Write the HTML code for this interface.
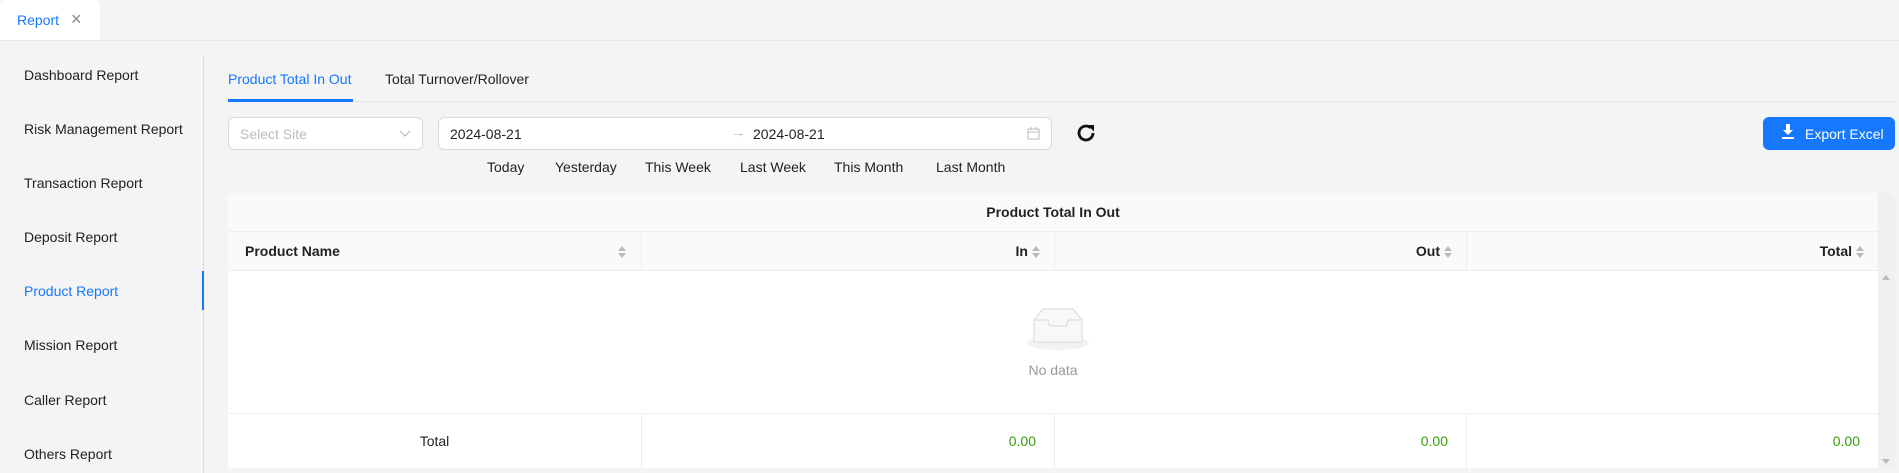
<!DOCTYPE html>
<html><head><meta charset="utf-8"><style>
*{box-sizing:border-box;margin:0;padding:0}
body{width:1899px;height:473px;overflow:hidden;background:#f4f4f4;font-family:"Liberation Sans",sans-serif;font-size:14px;color:#222;position:relative}
.a{position:absolute;white-space:nowrap}
.blue{color:#1677ff}
.sort{display:inline-block;vertical-align:middle;margin-left:4px;width:8px;height:14px;position:relative}
.sort:before{content:"";position:absolute;left:0;top:1px;border:4px solid transparent;border-bottom:5px solid #bbb;border-top:0}
.sort:after{content:"";position:absolute;left:0;top:8px;border:4px solid transparent;border-top:5px solid #bbb;border-bottom:0}
</style></head><body>
<div class="a" style="left:0;top:0;width:100px;height:40px;background:#fff;border-radius:6px 6px 0 0"></div>
<div class="a blue" style="left:17px;top:12px">Report</div>
<div class="a" style="left:71px;top:9px;color:#888;font-size:18px">×</div>
<div class="a" style="left:0;top:40px;width:1899px;height:1px;background:#e8e8e8"></div>

<div class="a" style="left:203px;top:55px;width:1px;height:418px;background:#ddd"></div>
<div class="a" style="left:202px;top:271px;width:2px;height:39px;background:#1677ff"></div>
<div class="a" style="left:24px;top:67px">Dashboard Report</div>
<div class="a" style="left:24px;top:121px">Risk Management Report</div>
<div class="a" style="left:24px;top:175px">Transaction Report</div>
<div class="a" style="left:24px;top:229px">Deposit Report</div>
<div class="a blue" style="left:24px;top:283px">Product Report</div>
<div class="a" style="left:24px;top:337px">Mission Report</div>
<div class="a" style="left:24px;top:392px">Caller Report</div>
<div class="a" style="left:24px;top:446px">Others Report</div>

<div class="a blue" style="left:228px;top:71px">Product Total In Out</div>
<div class="a" style="left:385px;top:71px">Total Turnover/Rollover</div>
<div class="a" style="left:228px;top:101px;width:1667px;height:1px;background:#e6e6e6"></div>
<div class="a" style="left:228px;top:99px;width:125px;height:3px;background:#1677ff"></div>

<div class="a" style="left:228px;top:117px;width:195px;height:33px;background:#fff;border:1px solid #d9d9d9;border-radius:6px"></div>
<div class="a" style="left:240px;top:126px;color:#bbb">Select Site</div>
<svg class="a" style="left:399px;top:130px" width="12" height="8" viewBox="0 0 12 8"><path d="M1 1l5 5 5-5" fill="none" stroke="#bbb" stroke-width="1.2"/></svg>
<div class="a" style="left:438px;top:117px;width:614px;height:33px;background:#fff;border:1px solid #d9d9d9;border-radius:6px"></div>
<div class="a" style="left:450px;top:126px">2024-08-21</div>
<div class="a" style="left:731px;top:124px;color:#bbb">→</div>
<div class="a" style="left:753px;top:126px">2024-08-21</div>
<svg class="a" style="left:1027px;top:127px" width="13" height="13" viewBox="0 0 13 13"><rect x="1" y="2" width="11" height="10" fill="none" stroke="#bbb"/><line x1="1" y1="5" x2="12" y2="5" stroke="#bbb"/><line x1="4" y1="0" x2="4" y2="3" stroke="#bbb"/><line x1="9" y1="0" x2="9" y2="3" stroke="#bbb"/></svg>
<svg class="a" style="left:1074px;top:121px" width="24" height="24" viewBox="0 0 24 24"><path d="M19 12a7 7 0 1 1-2.2-5.1" fill="none" stroke="#111" stroke-width="2.8"/><path d="M13.5 4h6.5v6.5z" fill="#111"/></svg>
<div class="a" style="left:1763px;top:117px;width:132px;height:33px;background:#1677ff;border-radius:6px;color:#fff;padding:9px 0 0 42px">Export Excel</div>
<svg class="a" style="left:1782px;top:124px" width="12" height="15" viewBox="0 0 12 15"><path d="M4 0h4v6h3l-5 5-5-5h3z" fill="#fff"/><rect x="0" y="13" width="12" height="2" fill="#fff"/></svg>

<div class="a" style="left:487px;top:159px">Today</div>
<div class="a" style="left:555px;top:159px">Yesterday</div>
<div class="a" style="left:645px;top:159px">This Week</div>
<div class="a" style="left:740px;top:159px">Last Week</div>
<div class="a" style="left:834px;top:159px">This Month</div>
<div class="a" style="left:936px;top:159px">Last Month</div>

<div class="a" style="left:228px;top:193px;width:1667px;height:275px;background:#fff;border-radius:6px 6px 0 0;overflow:hidden">
 <div class="a" style="left:0;top:0;width:1650px;height:77px;background:#fafafa"></div>
 <div class="a" style="left:1650px;top:0;width:17px;height:275px;background:#f0f0f0"></div>
 <div class="a" style="left:0;top:38px;width:1650px;height:1px;background:#eee"></div>
 <div class="a" style="left:0;top:77px;width:1650px;height:1px;background:#eee"></div>
 <div class="a" style="left:0;top:220px;width:1650px;height:1px;background:#eee"></div>
 <div class="a" style="left:413px;top:39px;width:1px;height:38px;background:#eee"></div>
 <div class="a" style="left:826px;top:39px;width:1px;height:38px;background:#eee"></div>
 <div class="a" style="left:1238px;top:39px;width:1px;height:38px;background:#eee"></div>
 <div class="a" style="left:413px;top:221px;width:1px;height:54px;background:#eee"></div>
 <div class="a" style="left:826px;top:221px;width:1px;height:54px;background:#eee"></div>
 <div class="a" style="left:1238px;top:221px;width:1px;height:54px;background:#eee"></div>
 <div class="a" style="left:0;top:11px;width:1650px;text-align:center;font-weight:bold">Product Total In Out</div>
 <div class="a" style="left:17px;top:50px;font-weight:bold">Product Name</div>
 <div class="a" style="left:386px;top:50px"><span class="sort"></span></div>
 <div class="a" style="right:855px;top:50px;font-weight:bold">In<span class="sort"></span></div>
 <div class="a" style="right:443px;top:50px;font-weight:bold">Out<span class="sort"></span></div>
 <div class="a" style="right:31px;top:50px;font-weight:bold">Total<span class="sort"></span></div>
 <div class="a" style="left:1654px;top:82px;border:4px solid transparent;border-bottom:5px solid #bbb;border-top:0"></div>
 <div class="a" style="left:1654px;top:266px;border:4px solid transparent;border-top:5px solid #bbb;border-bottom:0"></div>
 <svg class="a" style="left:798px;top:113px" width="64" height="46" viewBox="0 0 64 46"><ellipse cx="32" cy="37" rx="31" ry="7" fill="#f2f2f2"/><path d="M8 14 L17 3 H47 L56 14 V36 H8z" fill="#f8f8f8" stroke="#ddd" stroke-width="1.2"/><path d="M8 14 H22 Q22 20 26 20 H38 Q42 20 42 14 H56" fill="none" stroke="#ddd" stroke-width="1.2"/></svg>
 <div class="a" style="left:0;top:169px;width:1650px;text-align:center;color:#999">No data</div>
 <div class="a" style="left:0;top:240px;width:413px;text-align:center">Total</div>
 <div class="a" style="right:859px;top:240px;color:#389e0d">0.00</div>
 <div class="a" style="right:447px;top:240px;color:#389e0d">0.00</div>
 <div class="a" style="right:35px;top:240px;color:#389e0d">0.00</div>
</div>
</body></html>
